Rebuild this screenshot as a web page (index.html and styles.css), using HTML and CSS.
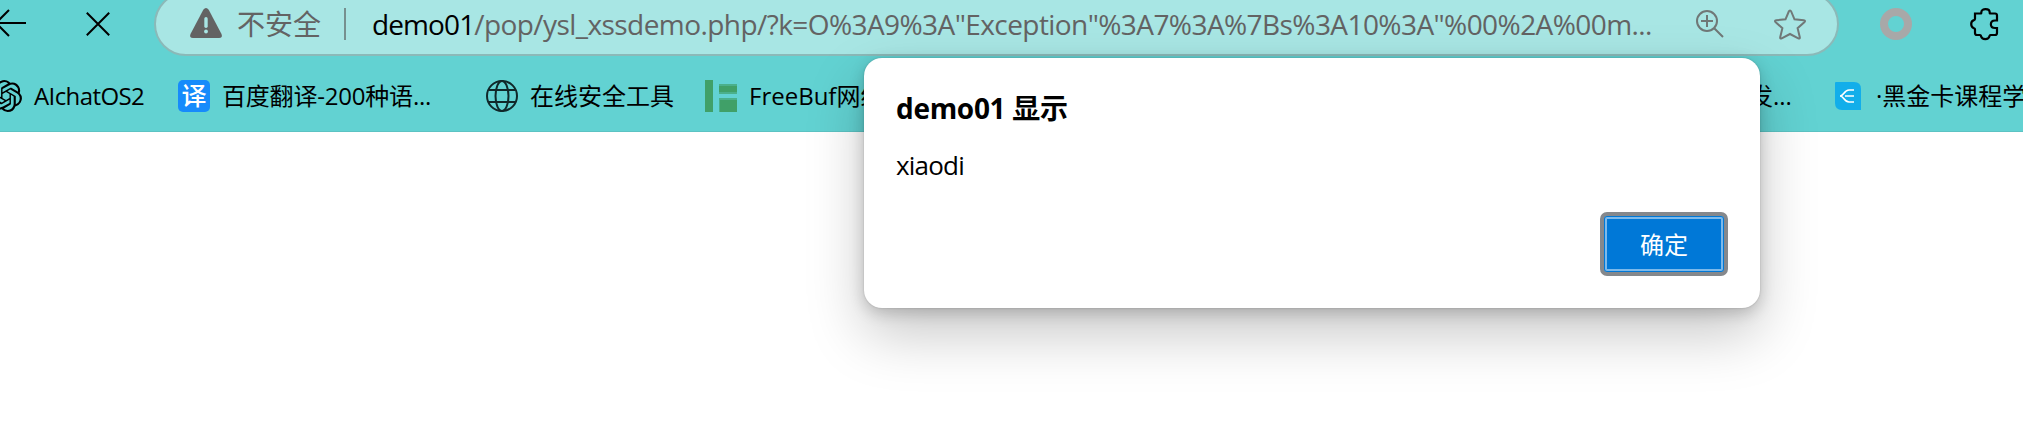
FILE: index.html
```
<!DOCTYPE html>
<html lang="zh-CN">
<head>
<meta charset="utf-8">
<title>demo01</title>
<link rel="stylesheet" href="styles.css">
</head>
<body>
<header class="chrome">
  <div class="toolbar">
    <svg class="back" viewBox="0 0 32 32"><path d="M32 16H3M15 3L2 16l13 13"/></svg>
    <svg class="stop" viewBox="0 0 24 24"><path d="M.8.8l22.4 22.4M23.2.8L.8 23.2"/></svg>
    <div class="address">
      <svg class="warn" viewBox="0 0 32 30"><path class="warn-body" d="M13.3 1.8Q16-1.600 18.700 1.800L31.500 26Q33 30 29 30H3Q-1 30 .5 26Z"/><rect class="warn-mark" x="14.300" y="9" width="3.400" height="11" rx="1.700"/><circle class="warn-mark" cx="16" cy="23.500" r="1.900"/></svg>
      <span class="insecure">不安全</span>
      <span class="divider"></span>
      <span class="url"><span class="host">demo01</span><span class="path">/pop/ysl_xssdemo.php/?k=O%3A9%3A"Exception"%3A7%3A%7Bs%3A10%3A"%00%2A%00m...</span></span>
      <svg class="magnify" viewBox="0 0 28 28"><circle cx="11" cy="11" r="10"/><path d="M18.200 18.200L27 27M5 11h12M11 5v12"/></svg>
      <svg class="star" viewBox="0 0 32 31"><path d="M16 1.500Q16.800 1.500 17.200 2.500L20.500 10.300L29.800 11.300Q32 11.600 30.300 13.200L23.600 19.200L25.800 28.300Q26 30 24.300 29.300L16 25L7.700 29.300Q6 30 6.200 28.300L8.400 19.200L1.700 13.200Q0 11.600 2.200 11.300L11.500 10.300L14.800 2.500Q15.200 1.500 16 1.500Z"/></svg>
    </div>
    <span class="ring"></span>
    <svg class="puzzle" viewBox="0 0 28 32"><path d="M5 5.500H10.500C11.500 5.500 11.300 4.800 11.300 4.300C11.300 0 19.700 0 19.700 4.300C19.700 4.800 19.500 5.500 20.500 5.500H25Q27 5.500 27 7.500V12.500H25C19.500 12.500 19.500 20 25 20H27V25Q27 27 25 27H20.500C19.500 27 19.700 27.500 19.500 28.200C18.500 32 12 32 11 28.200C10.800 27.500 11 27 10 27H7Q5 27 5 25V21.500C5 20.500 4.500 20.400 3.900 20.200C.3 19 .3 13.200 3.900 12.100C4.500 11.900 5 11.700 5 10.700Z"/></svg>
  </div>
  <nav class="bookmarks">
    <a class="bm bm-ai">
      <svg class="ic" viewBox="0 0 24 24"><path d="M22.2819 9.8211a5.9847 5.9847 0 0 0-.5157-4.9108 6.0462 6.0462 0 0 0-6.5098-2.9A6.0651 6.0651 0 0 0 4.9807 4.1818a5.9847 5.9847 0 0 0-3.9977 2.9 6.0462 6.0462 0 0 0 .7427 7.0966 5.98 5.98 0 0 0 .511 4.9107 6.051 6.051 0 0 0 6.5146 2.9001A5.9847 5.9847 0 0 0 13.2599 24a6.0557 6.0557 0 0 0 5.7718-4.2058 5.9894 5.9894 0 0 0 3.9977-2.9001 6.0557 6.0557 0 0 0-.7475-7.0729zm-9.022 12.6081a4.4755 4.4755 0 0 1-2.8764-1.0408l.1419-.0804 4.7783-2.7582a.7948.7948 0 0 0 .3927-.6813v-6.7369l2.02 1.1686a.071.071 0 0 1 .038.052v5.5826a4.504 4.504 0 0 1-4.4945 4.4944zm-9.6607-4.1254a4.4708 4.4708 0 0 1-.5346-3.0137l.142.0852 4.783 2.7582a.7712.7712 0 0 0 .7806 0l5.8428-3.3685v2.3324a.0804.0804 0 0 1-.0332.0615L9.74 19.9502a4.4992 4.4992 0 0 1-6.1408-1.6464zM2.3408 7.8956a4.485 4.485 0 0 1 2.3655-1.9728V11.6a.7664.7664 0 0 0 .3879.6765l5.8144 3.3543-2.0201 1.1685a.0757.0757 0 0 1-.071 0l-4.8303-2.7865A4.504 4.504 0 0 1 2.3408 7.872zm16.5963 3.8558L13.1038 8.364 15.1192 7.2a.0757.0757 0 0 1 .071 0l4.8303 2.7913a4.4944 4.4944 0 0 1-.6765 8.1042v-5.6772a.79.79 0 0 0-.407-.667zm2.0107-3.0231l-.142-.0852-4.7735-2.7818a.7759.7759 0 0 0-.7854 0L9.409 9.2297V6.8974a.0662.0662 0 0 1 .0284-.0615l4.8303-2.7866a4.4992 4.4992 0 0 1 6.6802 4.66zM8.3065 12.863l-2.02-1.1638a.0804.0804 0 0 1-.038-.0567V6.0742a4.4992 4.4992 0 0 1 7.3757-3.4537l-.142.0805L8.704 5.459a.7948.7948 0 0 0-.3927.6813zm1.0976-2.3654l2.602-1.4998 2.6069 1.4998v2.9994l-2.5974 1.4997-2.6067-1.4997Z"/></svg>
      <span>AIchatOS2</span>
    </a>
    <a class="bm bm-fanyi"><span class="yi">译</span><span class="label">百度翻译-200种语...</span></a>
    <a class="bm bm-tools">
      <svg class="ic globe" viewBox="0 0 32 32"><circle cx="16" cy="16" r="15"/><ellipse cx="16" cy="16" rx="6.500" ry="15"/><path d="M2.500 10h27M2.500 22h27"/></svg>
      <span>在线安全工具</span>
    </a>
    <a class="bm bm-freebuf">
      <svg class="ic" viewBox="0 0 32 32"><path fill="#40a068" d="M0 0h8v32H0zM14 6h18v6H14zM15 20h17v12H15z"/><path fill="#4bb08b" d="M14 4h18v2H14zM14 12h18v2H14zM14 18h18v2H14zM14 20h1v12h-1z"/></svg>
      <span>FreeBuf网络</span>
    </a>
    <a class="bm bm-dev"><span>发...</span></a>
    <a class="bm bm-card">
      <svg class="card" viewBox="0 0 26 28"><path fill="#12aeea" d="M1 0H19Q26 0 26 7V28H7Q0 28 0 21V1Q0 0 1 0Z"/><path fill="none" stroke="#fff" stroke-width="1.700" d="M19 8H14C9 8 9 14 5 14C9 14 9 20 14 20H19M10 14H19"/></svg>
      <span>·黑金卡课程学</span>
    </a>
  </nav>
</header>
<section class="dialog">
  <h1 class="title">demo01 显示</h1>
  <p class="message">xiaodi</p>
  <button class="ok">确定</button>
</section>
</body>
</html>
```
FILE: styles.css
```
* { box-sizing: border-box; }
body {
  margin: 0;
  height: 433px;
  overflow: hidden;
  background: #fff;
  color: #000;
  font-family: "Open Sans", "Noto Sans CJK SC", sans-serif;
}
svg { display: block; flex: none; fill: none; overflow: visible; }
.chrome {
  height: 132px;
  overflow: hidden;
  background: #62d2d2;
  border-bottom: 1px solid #5cc3c3;
}
.toolbar {
  display: flex;
  align-items: center;
  height: 64px;
  margin-top: -8px;
}
.back { width: 32px; height: 32px; margin-left: -6px; margin-top: -2px; stroke: #000; stroke-width: 2; }
.stop { width: 24px; height: 24px; margin-left: 60px; stroke: #000; stroke-width: 2; }
.address {
  display: flex;
  align-items: center;
  width: 1685px;
  height: 64px;
  margin-left: 44px;
  padding-left: 34px;
  border: 2px solid #8bb9b8;
  border-radius: 32px;
  background: #a8e6e4;
  font-size: 28px;
  color: #636363;
  white-space: nowrap;
}
.warn { width: 32px; height: 30px; margin-top: -2px; }
.warn-body { fill: #636363; }
.warn-mark { fill: #a8e6e4; }
.insecure { width: 84px; margin-left: 15px; line-height: 40px; }
.divider { width: 2px; height: 32px; margin-left: 23px; background: #76908f; }
.url { width: 1324px; margin-left: 26px; line-height: 40px; }
.host { letter-spacing: -0.9px; color: #000; }
.path { letter-spacing: -0.57px; }
.magnify { width: 28px; height: 28px; stroke: #707877; stroke-width: 2; }
.star { width: 32px; height: 31px; margin-left: 50px; stroke: #707877; stroke-width: 2; }
.ring {
  width: 32px;
  height: 32px;
  margin-left: 41px;
  border: 8px solid #a8a8a8;
  border-radius: 50%;
}
.puzzle { width: 28px; height: 32px; margin-left: 58px; stroke: #000; stroke-width: 2.2; }
.bookmarks {
  display: flex;
  align-items: center;
  height: 75px;
  padding-top: 5px;
  margin-left: -10px;
  font-size: 24px;
  line-height: 36px;
  white-space: nowrap;
}
.bm { display: flex; flex: none; align-items: center; gap: 12px; }
.ic { width: 32px; height: 32px; }
.bm-ai { width: 188px; }
.bm-ai .ic { fill: #000; }
.bm-ai span { letter-spacing: -0.6px; }
.bm-fanyi { width: 308px; }
.bm-fanyi .label { letter-spacing: -0.2px; }
.yi {
  width: 32px;
  height: 32px;
  border-radius: 5px;
  background: #168bfb;
  color: #fff;
  font-size: 25px;
  font-weight: 500;
  line-height: 31px;
  text-align: center;
}
.globe { stroke: #10282a; stroke-width: 2; }
.bm-tools { width: 219px; }
.bm-freebuf { width: 1044px; }
.bm-dev { width: 86px; }
.bm-card { gap: 15px; }
.card { width: 26px; height: 28px; }
.dialog {
  position: absolute;
  left: 864px;
  top: 58px;
  display: flex;
  flex-direction: column;
  width: 896px;
  height: 250px;
  padding: 30px 32px 32px;
  border-radius: 18px;
  background: #fff;
  box-shadow: 0 0 2px rgba(0, 0, 0, .2), 0 4.8px 14.4px rgba(0, 0, 0, .18), 0 25.6px 57.6px rgba(0, 0, 0, .22);
}
.title { margin: 0; font-size: 28px; line-height: 40px; letter-spacing: -0.3px; }
.message { margin: 18px 0 0; font-size: 26px; line-height: 38px; letter-spacing: -0.8px; }
.ok {
  align-self: flex-end;
  width: 128px;
  height: 64px;
  margin-top: auto;
  padding: 0 0 2px;
  border: 4px solid #85888c;
  border-radius: 7px;
  background: #0078d7;
  box-shadow: inset 0 0 0 1px #0078d7, inset 0 0 0 3px #7cb9ea;
  color: #fff;
  font: 24px "Noto Sans CJK SC", sans-serif;
}
```
